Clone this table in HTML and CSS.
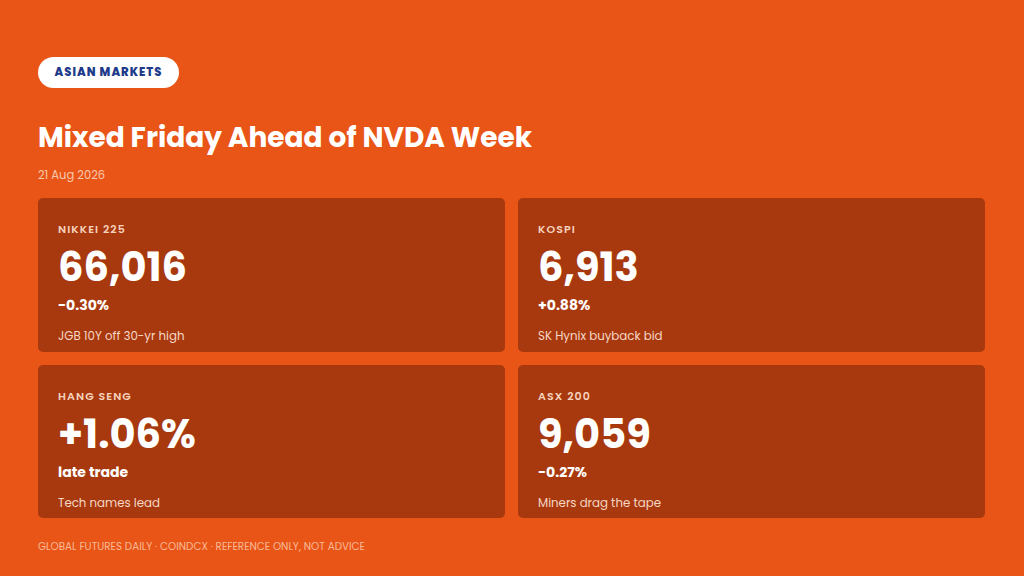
FILE: index.html
```html
<!DOCTYPE html>
<html>
<head>
<meta charset="utf-8">
<link rel="stylesheet" href="styles.css">
</head>
<body>
<main class="page">
  <div class="pill">ASIAN MARKETS</div>
  <h1 class="title">Mixed Friday Ahead of NVDA Week</h1>
  <div class="date">21 Aug 2026</div>
  <section class="grid">
    <div class="card">
      <div class="label">NIKKEI 225</div>
      <div class="value">66,016</div>
      <div class="change">-0.30%</div>
      <div class="note">JGB 10Y off 30-yr high</div>
    </div>
    <div class="card">
      <div class="label">KOSPI</div>
      <div class="value">6,913</div>
      <div class="change">+0.88%</div>
      <div class="note">SK Hynix buyback bid</div>
    </div>
    <div class="card">
      <div class="label">HANG SENG</div>
      <div class="value">+1.06%</div>
      <div class="change">late trade</div>
      <div class="note">Tech names lead</div>
    </div>
    <div class="card">
      <div class="label">ASX 200</div>
      <div class="value">9,059</div>
      <div class="change">-0.27%</div>
      <div class="note">Miners drag the tape</div>
    </div>
  </section>
  <footer class="footer">GLOBAL FUTURES DAILY · COINDCX · REFERENCE ONLY, NOT ADVICE</footer>
</main>
</body>
</html>
```

FILE: styles.css
```css
* { box-sizing: border-box; }
html, body {
  margin: 0;
  padding: 0;
  width: 1024px;
  height: 576px;
  overflow: hidden;
  background: #e85516;
  font-family: "Poppins", "Open Sans", "DejaVu Sans", sans-serif;
  color: #ffffff;
}
.page {
  padding: 57px 39px 0 38px;
  display: flex;
  flex-direction: column;
}
.pill {
  align-self: flex-start;
  height: 31px;
  width: 141px;
  border-radius: 16px;
  background: #ffffff;
  color: #1e3a8a;
  font-size: 11.5px;
  font-weight: 800;
  letter-spacing: 1px;
  display: flex;
  align-items: center;
  justify-content: center;
}
.title {
  margin: 33px 0 0 0;
  font-size: 28px;
  line-height: 34px;
  font-weight: 700;
}
.date {
  margin-top: 12px;
  font-size: 11.5px;
  line-height: 16px;
  color: #f8c8ad;
}
.grid {
  margin-top: 15px;
  display: grid;
  grid-template-columns: 1fr 1fr;
  grid-template-rows: 154px 153px;
  gap: 13px;
}
.card {
  background: #a8390e;
  border-radius: 5px;
  padding: 24px 20px 0 20px;
  display: flex;
  flex-direction: column;
}
.label {
  font-size: 11px;
  line-height: 14px;
  font-weight: 600;
  letter-spacing: 1.1px;
  color: #f6d2bd;
}
.value {
  margin-top: 8px;
  font-size: 40px;
  line-height: 46px;
  font-weight: 700;
}
.change {
  margin-top: 6px;
  font-size: 14px;
  line-height: 18px;
  font-weight: 700;
}
.note {
  margin-top: 13px;
  font-size: 11.8px;
  line-height: 18px;
  color: #f6d6c4;
}
.footer {
  margin-top: 22px;
  font-size: 10.4px;
  line-height: 14px;
  color: #f9b896;
}
```
